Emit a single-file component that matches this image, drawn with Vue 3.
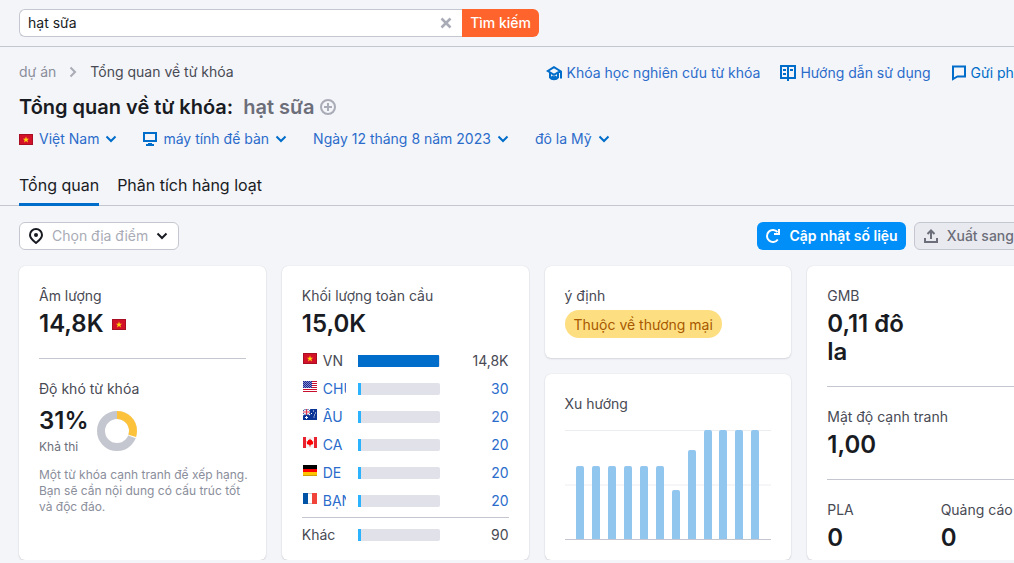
<script setup>
import { ref } from 'vue'

const query = ref('hạt sữa')

const filters = [
  { label: 'Việt Nam', icon: 'flag' },
  { label: 'máy tính để bàn', icon: 'desktop' },
  { label: 'Ngày 12 tháng 8 năm 2023' },
  { label: 'đô la Mỹ' },
]

const countries = [
  { code: 'VN', flag: 'vn', value: '14,8K', share: 98, current: true },
  { code: 'CHÚNG TA', flag: 'us', value: '30', share: 4 },
  { code: 'ÂU', flag: 'au', value: '20', share: 4 },
  { code: 'CA', flag: 'ca', value: '20', share: 4 },
  { code: 'DE', flag: 'de', value: '20', share: 4 },
  { code: 'BẠN', flag: 'fr', value: '20', share: 4 },
]

const trend = [67, 67, 67, 67, 67, 67, 45, 82, 100, 100, 100, 100]
</script>

<template>
  <div class="page">
    <header class="topbar">
      <form class="search" role="search" @submit.prevent>
        <div class="search-box">
          <input v-model="query" type="text" aria-label="Từ khóa" />
          <button class="clear" type="button" aria-label="Xóa" @click="query = ''">
            <svg width="12" height="12" viewBox="0 0 12 12"><path d="M1.5 1.5l9 9M10.500 1.500l-9 9" fill="none" stroke="#a9abb6" stroke-width="2.500" /></svg>
          </button>
        </div>
        <button class="submit" type="submit">Tìm kiếm</button>
      </form>
    </header>

    <section class="heading">
      <div class="crumb-row">
        <nav class="crumbs" aria-label="Đường dẫn">
          <a href="#">dự án</a>
          <svg width="8" height="12" viewBox="0 0 8 12"><path d="M1.500 1.500L6 6l-4.500 4.500" fill="none" stroke="#a9abb6" stroke-width="2" /></svg>
          <span>Tổng quan về từ khóa</span>
        </nav>
        <div class="help">
          <a href="#">
            <svg width="16" height="16" viewBox="0 0 16 16" fill="none" stroke="#006dca" stroke-width="2"><path d="M8 2.200L1.800 6 8 9.800 14.200 6zM15 6v7.500M4 8v4.500c1.500 2.300 6.500 2.300 8 0V8M5.500 11.300c1.200 1.200 3.800 1.200 5 0" /></svg>
            <span>Khóa học nghiên cứu từ khóa</span>
          </a>
          <a href="#">
            <svg width="16" height="16" viewBox="0 0 16 16"><path d="M1 1h14v12H1zM8 1v15" fill="none" stroke="#006dca" stroke-width="2" /><path d="M3 4h3v2H3zM3 8h3v2H3zM10 4h3v2h-3z" fill="#006dca" /></svg>
            <span>Hướng dẫn sử dụng</span>
          </a>
          <a href="#" class="strong">
            <svg width="16" height="16" viewBox="0 0 16 16"><path d="M2 1.500h12v10H6.500L2 14z" fill="none" stroke="#006dca" stroke-width="2" /></svg>
            <span>Gửi phản hồi</span>
          </a>
        </div>
      </div>

      <h1>
        Tổng quan về từ khóa: <span>hạt sữa</span>
        <button type="button" aria-label="Thêm vào danh sách">
          <svg width="16" height="16" viewBox="0 0 16 16" fill="none" stroke="#a9abb6"><circle cx="8" cy="8" r="7" stroke-width="2" /><path d="M8 4v8M4 8h8" stroke-width="2" /></svg>
        </button>
      </h1>

      <div class="filters">
        <button v-for="f in filters" :key="f.label" type="button">
          <svg v-if="f.icon === 'flag'" width="14" height="11" viewBox="0 0 14 11"><use href="#flag-vn" /></svg>
          <svg v-if="f.icon === 'desktop'" width="14" height="14" viewBox="0 0 14 14"><path d="M1 1h12v8H1z" fill="none" stroke="#006dca" stroke-width="2" /><path d="M5 11h4v1h2v2H3v-2h2z" fill="#006dca" /></svg>
          <span>{{ f.label }}</span>
          <svg class="chev" width="12" height="12" viewBox="0 0 12 12"><path d="M1.500 3.500L6 8l4.500-4.500" fill="none" stroke="#006dca" stroke-width="2" /></svg>
        </button>
      </div>
    </section>

    <nav class="tabs">
      <a href="#" class="active" aria-current="page">Tổng quan</a>
      <a href="#">Phân tích hàng loạt</a>
    </nav>

    <main>
      <div class="toolbar">
        <button class="place" type="button">
          <svg width="16" height="16" viewBox="0 0 16 16"><path d="M8 1a6 6 0 0 0-6 6c0 3.500 3.500 6 6 8 2.500-2 6-4.500 6-8a6 6 0 0 0-6-6z" fill="none" stroke="#191b23" stroke-width="2" /><circle cx="8" cy="7" r="2" fill="#191b23" /></svg>
          <span>Chọn địa điểm</span>
          <svg width="12" height="12" viewBox="0 0 12 12"><path d="M1.500 3.500L6 8l4.500-4.500" fill="none" stroke="#191b23" stroke-width="2" /></svg>
        </button>
        <div class="actions">
          <button class="primary" type="button">
            <svg width="16" height="16" viewBox="0 0 16 16" fill="none" stroke="#fff" stroke-width="2"><path d="M12.800 11.500A6 6 0 1 1 12.500 4" /><path d="M14 1v5H9" /></svg>
            <span>Cập nhật số liệu</span>
          </button>
          <button class="secondary" type="button">
            <svg width="16" height="16" viewBox="0 0 16 16" fill="none" stroke="#6c6e79" stroke-width="2"><path d="M2 10v4h12v-4M8 11V3M4.500 6L8 2.500 11.500 6" /></svg>
            <span>Xuất sang PDF</span>
          </button>
        </div>
      </div>

      <div class="cards">
        <article class="card">
          <h2>Âm lượng</h2>
          <p class="value">14,8K <svg width="14" height="11" viewBox="0 0 14 11"><use href="#flag-vn" /></svg></p>
          <hr />
          <h2>Độ khó từ khóa</h2>
          <div class="difficulty">
            <div>
              <p class="value">31%</p>
              <p class="rating">Khả thi</p>
            </div>
            <svg width="40" height="40" viewBox="0 0 40 40" fill="none" stroke-width="8">
              <circle cx="20" cy="20" r="16" stroke="#c4c7cf" />
              <circle cx="20" cy="20" r="16" stroke="#fff" pathLength="100" stroke-dasharray="31 69" transform="rotate(-90 20 20)" />
              <circle cx="20" cy="20" r="16" stroke="#fdc23c" pathLength="100" stroke-dasharray="30 70" transform="rotate(-90 20 20)" />
            </svg>
          </div>
          <p class="note">Một từ khóa cạnh tranh để xếp hạng.<br />Bạn sẽ cần nội dung có cấu trúc tốt<br />và độc đáo.</p>
        </article>

        <article class="card">
          <h2>Khối lượng toàn cầu</h2>
          <p class="value">15,0K</p>
          <table>
            <tbody>
              <tr v-for="c in countries" :key="c.flag">
                <th scope="row">
                  <div class="country">
                    <svg width="14" height="11" viewBox="0 0 14 11"><use :href="'#flag-' + c.flag" /></svg>
                    <span v-if="c.current">{{ c.code }}</span>
                    <a v-else href="#">{{ c.code }}</a>
                  </div>
                </th>
                <td><div class="meter" :class="{ full: c.current }"><i :style="{ width: c.share + '%' }"></i></div></td>
                <td class="num"><span v-if="c.current">{{ c.value }}</span><a v-else href="#">{{ c.value }}</a></td>
              </tr>
            </tbody>
            <tfoot>
              <tr>
                <th scope="row">Khác</th>
                <td><div class="meter"><i :style="{ width: '4%' }"></i></div></td>
                <td class="num">90</td>
              </tr>
            </tfoot>
          </table>
        </article>

        <div class="stack">
          <article class="card">
            <h2>ý định</h2>
            <span class="pill">Thuộc về thương mại</span>
          </article>
          <article class="card grow">
            <h2>Xu hướng</h2>
            <div class="chart" role="img" aria-label="Xu hướng">
              <div v-for="(v, i) in trend" :key="i" class="slot"><i :style="{ height: v + '%' }"></i></div>
            </div>
          </article>
        </div>

        <article class="card">
          <div class="pair">
            <div><h2>GMB</h2><p class="value">0,11 đô la</p></div>
          </div>
          <hr />
          <h2>Mật độ cạnh tranh</h2>
          <p class="value">1,00</p>
          <hr />
          <div class="pair">
            <div><h2>PLA</h2><p class="value">0</p></div>
            <div><h2>Quảng cáo</h2><p class="value">0</p></div>
          </div>
        </article>
      </div>
    </main>

    <svg class="defs" width="0" height="0" aria-hidden="true">
      <defs>
        <g id="flag-vn"><path d="M0 0h14v11H0z" fill="#a80f22" /><path d="M1 1h12v9H1z" fill="#d3122a" /><path d="M7 2.500l.8 2.200h2.400L8.300 6.100 9 8.500 7 7.100 5 8.500l.7-2.400-1.900-1.400h2.400z" fill="#ffd90f" /></g>
        <g id="flag-us"><path d="M0 0h14v11H0z" fill="#fff" /><path d="M0 .5h14M0 2.500h14M0 4.500h14M0 6.500h14M0 8.500h14M0 10.500h14" stroke="#c8102e" /><path d="M0 0h9v7H0z" fill="#1b2a8c" /><path d="M1 .5h8M1 2.500h8M1 4.500h8M1 6.500h8M0 1.500h9M0 3.500h9M0 5.500h9" stroke="#8089cf" stroke-dasharray="1 1" /></g>
        <g id="flag-au"><path d="M0 0h14v11H0z" fill="#0a3596" /><path d="M0 0l7 6M7 0L0 6" stroke="#fff" stroke-width="1.200" /><path d="M3.500 0v6M0 3h7" stroke="#fff" stroke-width="2" /><path d="M3.500 0v6M0 3h7" stroke="#e0314a" /><path d="M2 8.500h3M3.500 7v3M10 2h1M8 4.500h1M12 4h1M10.500 8h1M11 6h1" stroke="#fff" /></g>
        <g id="flag-ca"><path d="M0 0h14v11H0z" fill="#f6f6f6" /><path d="M0 0h3v11H0zM11 0h3v11h-3z" fill="#e8222e" /><path d="M7 1.500l1 1.700 1-.4v1.500l1.600.3-.6 1L10.200 7 7.500 8v1.500h-1V8L3.800 7 4 5.600l-.6-1L5 4.300V2.800l1 .4z" fill="#f00" /></g>
        <g id="flag-de"><path d="M0 0h14v4H0z" fill="#000" /><path d="M0 4h14v3H0z" fill="#f00" /><path d="M0 7h14v4H0z" fill="#ffc400" /><path d="M0 10h14v1H0z" fill="#cf9f08" /></g>
        <g id="flag-fr"><path d="M0 0h5v11H0z" fill="#0053a5" /><path d="M5 0h4v11H5z" fill="#fff" /><path d="M9 0h5v11H9z" fill="#f0443a" /><path d="M5 .5h4M5 10.500h4" stroke="#ccc" /></g>
      </defs>
    </svg>
  </div>
</template>

<style>
html,
body {
  margin: 0;
  background: #f4f5f9;
  overflow: hidden;
}
</style>

<style scoped>
.page {
  min-width: 1073px;
  color: #191b23;
  font: 400 14px/20px Inter, "Noto Sans", sans-serif;
}
.page * {
  box-sizing: border-box;
}
h1,
h2,
p {
  margin: 0;
}
button,
input {
  font: inherit;
  border: 0;
  padding: 0;
  background: none;
  color: inherit;
}
button {
  cursor: pointer;
}
a {
  color: #2b6ccb;
  text-decoration: none;
}
svg {
  display: block;
  flex: none;
}
.defs {
  position: absolute;
}
.topbar {
  padding: 9px 19px;
  border-bottom: 1px solid #c4c7cf;
}
.search {
  display: flex;
  width: 520px;
  height: 28px;
}
.search-box {
  flex: 1;
  display: flex;
  align-items: center;
  padding: 0 10px 0 8px;
  border: 1px solid #c4c7cf;
  border-right: 0;
  border-radius: 6px 0 0 6px;
  background: #fff;
}
.search-box input {
  flex: 1;
  min-width: 0;
  outline: 0;
}
.submit {
  padding: 0 8px;
  border-radius: 0 6px 6px 0;
  background: #ff642d;
  color: #fff;
  font-weight: 500;
}
.heading {
  padding: 14px 19px 0;
}
.crumb-row,
.crumbs,
.help,
.help a,
.filters,
.filters button,
.toolbar,
.actions,
.toolbar button {
  display: flex;
  align-items: center;
}
.crumb-row,
.toolbar {
  justify-content: space-between;
}
.crumbs {
  gap: 13px;
  color: #484a54;
}
.crumbs a {
  color: #8a8e9b;
}
.help {
  gap: 20px;
}
.help a {
  gap: 4px;
  padding-top: 2px;
  white-space: nowrap;
}
.help .strong {
  color: #006dca;
}
h1 {
  display: flex;
  align-items: center;
  gap: 10px;
  margin-top: 12px;
  font-size: 20px;
  line-height: 24px;
  font-weight: 600;
}
h1 span {
  color: #6c6e79;
}
h1 button {
  margin-left: -4px;
}
.filters {
  gap: 26px;
  margin-top: 10px;
  color: #2b6ccb;
}
.filters button {
  gap: 6px;
}
.tabs {
  display: flex;
  gap: 18px;
  margin-top: 20px;
  padding: 0 19px;
  border-bottom: 1px solid #c4c7cf;
  font-size: 16px;
  line-height: 24px;
}
.tabs a {
  margin-bottom: -1px;
  padding: 4px 0 6px;
  border-bottom: 3px solid transparent;
  color: #191b23;
}
.tabs .active {
  border-color: #006dca;
}
main {
  padding: 16px 19px 0;
}
.toolbar button {
  height: 28px;
  border-radius: 6px;
  white-space: nowrap;
}
.toolbar .place {
  gap: 8px;
  padding: 0 10px 0 8px;
  border: 1px solid #c4c7cf;
  background: #fff;
  color: #a9abb6;
}
.actions {
  gap: 8px;
}
.toolbar .primary {
  gap: 8px;
  padding: 0 8px;
  background: #008ff8;
  color: #fff;
  font-weight: 600;
}
.toolbar .secondary {
  gap: 8px;
  padding: 0 8px;
  border: 1px solid #c4c7cf;
  background: #e9eaf0;
  color: #6c6e79;
  font-weight: 500;
}
.cards {
  display: grid;
  grid-template-columns: repeat(4, minmax(0, 1fr));
  gap: 16px;
  margin-top: 16px;
}
.card {
  padding: 20px 20px 8px;
  border-radius: 6px;
  background: #fff;
  box-shadow: 0 0 1px rgba(25, 27, 35, 0.16), 0 1px 2px rgba(25, 27, 35, 0.12);
}
.stack {
  display: flex;
  flex-direction: column;
  gap: 16px;
}
.stack .card {
  padding-bottom: 20px;
}
.grow {
  flex: 1;
}
h2 {
  font-size: 14px;
  line-height: 20px;
  font-weight: 400;
  color: #484a54;
}
.value {
  margin-top: 4px;
  display: flex;
  align-items: center;
  gap: 8px;
  font-size: 24px;
  line-height: 28px;
  font-weight: 600;
}
hr {
  height: 1px;
  margin: 20px 0;
  border: 0;
  background: #c4c7cf;
}
.difficulty {
  display: flex;
  align-items: flex-end;
  gap: 8px;
  margin-top: 4px;
}
.difficulty svg {
  margin-bottom: 4px;
}
.rating {
  margin-top: 4px;
  font-size: 12px;
  line-height: 16px;
  color: #6c6e79;
}
.note {
  margin-top: 12px;
  font-size: 12px;
  line-height: 16px;
  color: #8a8e9b;
  white-space: nowrap;
}
table {
  width: 100%;
  margin-top: 9px;
  table-layout: fixed;
  border-collapse: separate;
  border-spacing: 0;
}
th,
td {
  height: 28px;
  padding: 0;
  font-weight: 400;
  text-align: left;
  color: #484a54;
}
th {
  width: 27%;
}
td {
  width: 40%;
}
.num {
  width: auto;
  text-align: right;
}
tfoot th,
tfoot td {
  height: 35px;
  border-top: 1px solid #c4c7cf;
}
tbody tr:last-child > * {
  height: 30px;
  padding-bottom: 2px;
}
.country {
  display: flex;
  gap: 6px;
  margin-right: 12px;
  padding-left: 1px;
  overflow: hidden;
  white-space: nowrap;
}
.country svg {
  margin-top: 2px;
}
.meter {
  height: 12px;
  border-radius: 0 2px 2px 0;
  background: #e0e1e9;
  overflow: hidden;
}
.meter i {
  display: block;
  height: 100%;
  background: #2bb3ff;
}
.meter.full i {
  background: #006dca;
}
.pill {
  display: inline-block;
  margin-top: 4px;
  padding: 5px 9px 3px;
  border-radius: 14px;
  background: #fddf81;
  color: #a75800;
  vertical-align: top;
}
.chart {
  display: flex;
  height: 110px;
  margin-top: 16px;
  padding: 0 8px;
  border-bottom: 1px solid #c4c7cf;
  background: linear-gradient(#ecedf1, #ecedf1) 0 0 / 100% 1px no-repeat,
    linear-gradient(#f6f6f9, #f6f6f9) 0 50% / 100% 2px no-repeat;
}
.slot {
  flex: 1;
  display: flex;
  align-items: flex-end;
  justify-content: center;
}
.slot i {
  width: 8px;
  border-radius: 2px 2px 0 0;
  background: #91c6ef;
}
.pair {
  display: grid;
  grid-template-columns: 1fr 1fr;
  gap: 20px;
}
</style>
